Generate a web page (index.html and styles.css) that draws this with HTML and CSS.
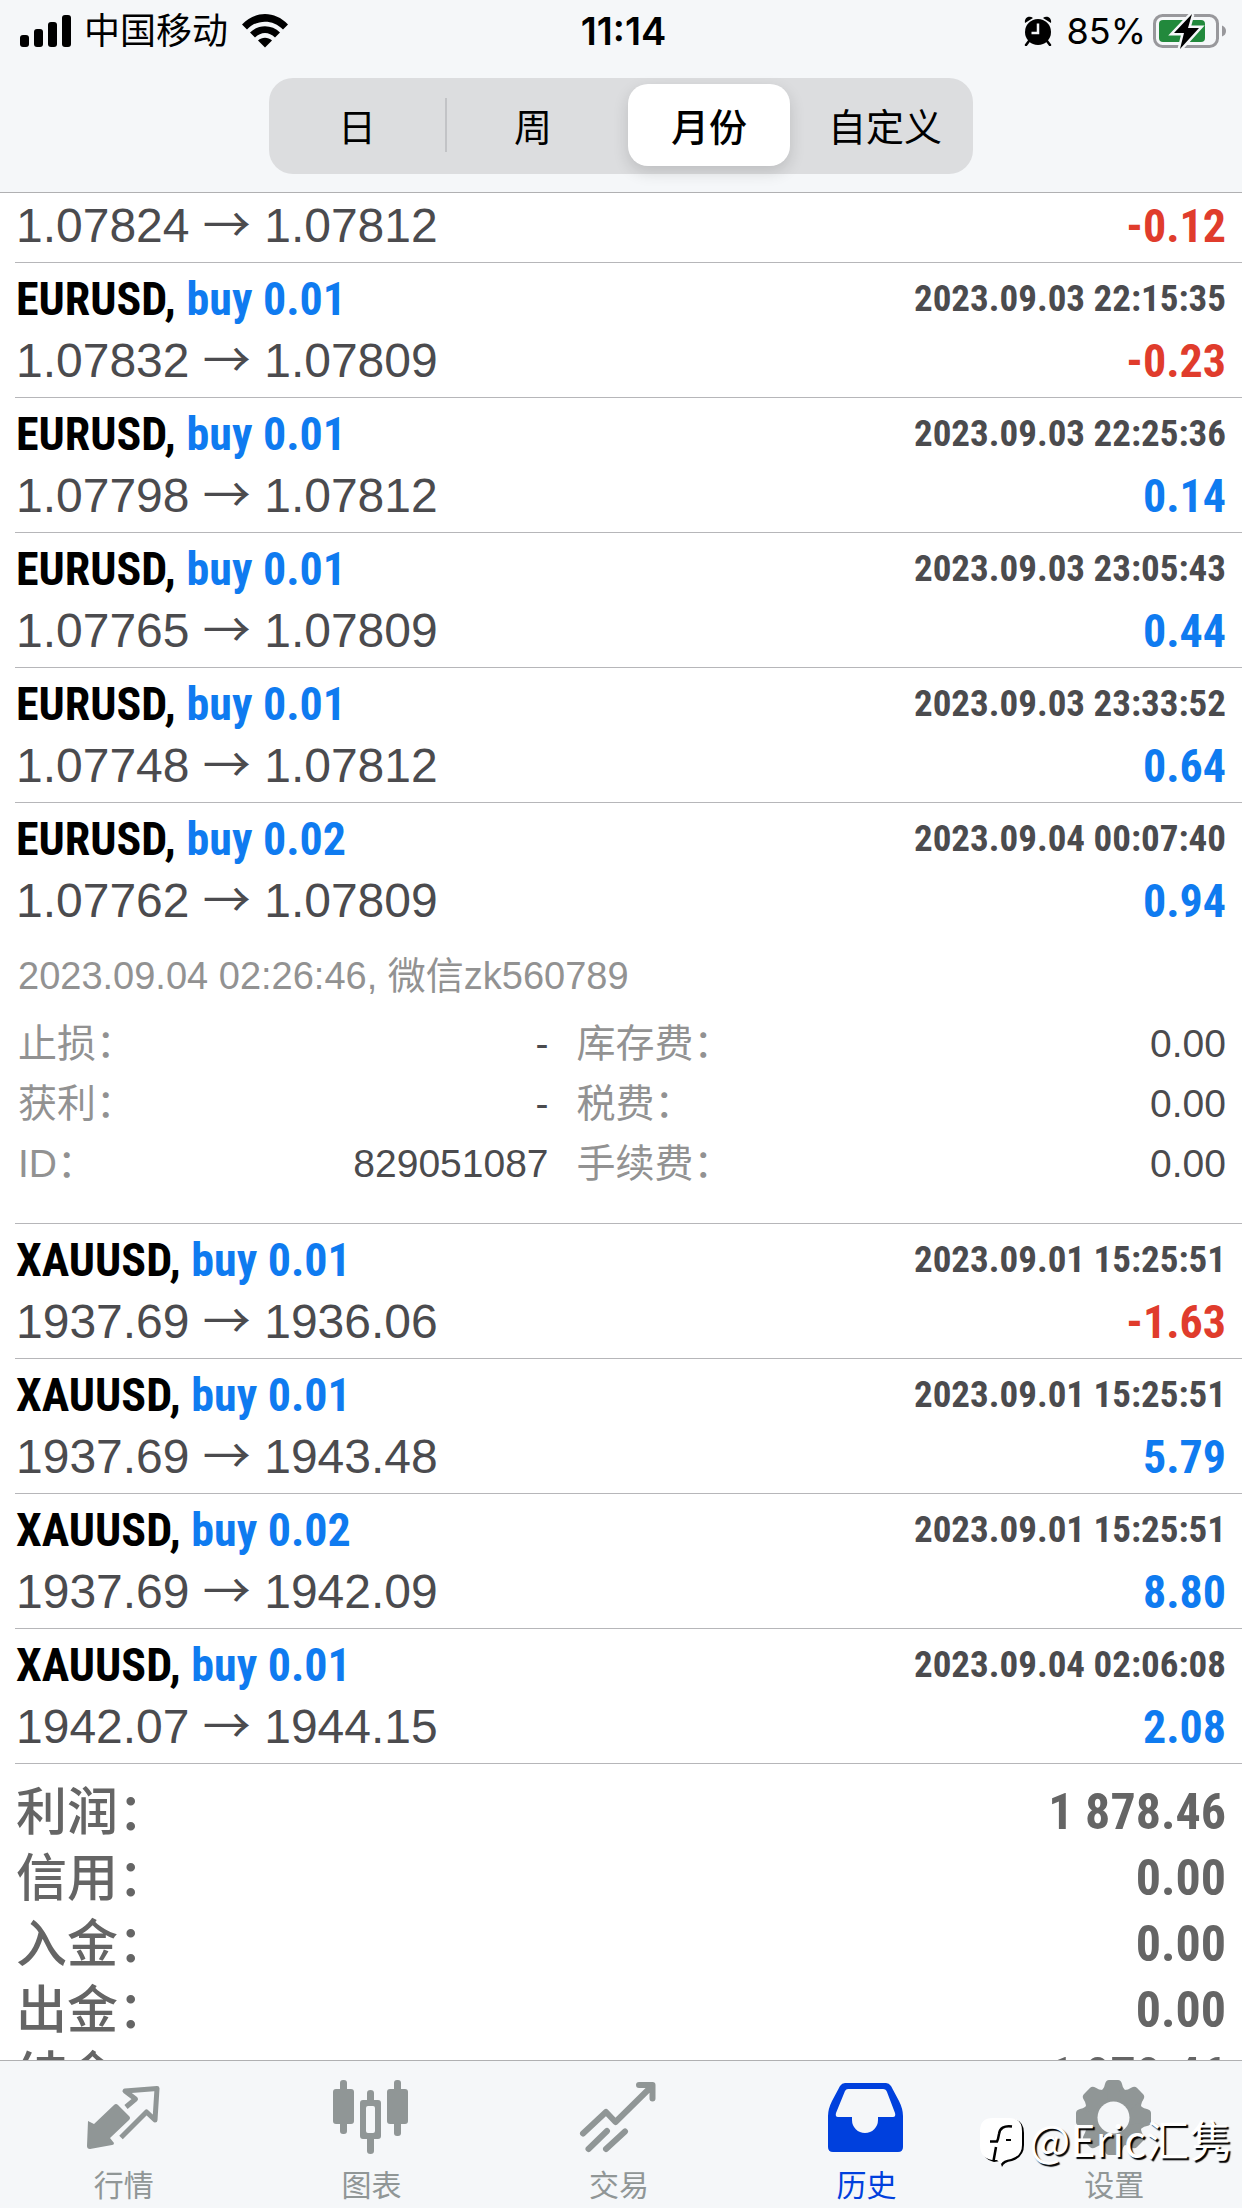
FILE: index.html
```html
<!DOCTYPE html>
<html lang="zh-CN">
<head>
<meta charset="utf-8">
<meta name="viewport" content="width=device-width, initial-scale=1">
<title>历史</title>
<link rel="stylesheet" href="styles.css">
</head>
<body>
<header class="top">
  <div class="status">
    <div class="status-side">
      <svg class="signal" viewBox="0 0 52 34" aria-hidden="true"><rect x="0" y="21" width="9" height="12" rx="3"/><rect x="14" y="15" width="9" height="18" rx="3"/><rect x="28" y="8" width="9" height="25" rx="3"/><rect x="42" y="1" width="9" height="32" rx="3"/></svg>
      <span class="carrier">中国移动</span>
      <svg class="wifi" viewBox="0 0 46 34" aria-hidden="true"><path d="M0 10.500C13-3.500 33-3.500 46 10.500L41 15.500C31 5 15 5 5 15.500Z"/><path d="M8 18.500C16 10 30 10 38 18.500L33 23.500C27 17.500 19 17.500 13 23.500Z"/><path d="M16 26.500C20 22.700 26 22.700 30 26.500L23 33.500Z"/></svg>
    </div>
    <time class="clock">11:14</time>
    <div class="status-side status-right">
      <svg class="alarm" viewBox="0 0 28 30" aria-hidden="true"><circle cx="14" cy="16" r="13"/><path d="M1 7C0 2 5-1 9 2ZM27 7C28 2 23-1 19 2Z"/><path d="M5 25L2 29M23 25L26 29" stroke="#000" stroke-width="2.500" stroke-linecap="round"/><path d="M14 7.500V17H7.500" fill="none" stroke="#f5f7f9" stroke-width="2.500"/></svg>
      <span>85%</span>
      <svg class="battery" viewBox="0 0 74 36" aria-hidden="true"><rect x="1.500" y="2.500" width="63" height="31" rx="8" fill="none" stroke="#98989c" stroke-width="3"/><rect x="6" y="7" width="46" height="22" rx="4" fill="#22893c"/><path d="M69 12.500Q73 14 73 18Q73 22 69 23.500Z" fill="#98989c"/><path d="M39 1L21 20H31L27 36L46 15H35Z" fill="#000" stroke="#f5f7f9" stroke-width="5" paint-order="stroke"/></svg>
    </div>
  </div>
  <fieldset class="segmented" aria-label="期间">
    <label class="segment"><input type="radio" name="period"><span>日</span></label>
    <label class="segment divided"><input type="radio" name="period"><span>周</span></label>
    <label class="segment"><input type="radio" name="period" checked><span>月份</span></label>
    <label class="segment"><input type="radio" name="period"><span>自定义</span></label>
  </fieldset>
</header>

<main class="content">
  <ul class="deals">
    <li class="deal">
      <div class="line"><span>1.07824 <i class="arrow">→</i> 1.07812</span><b class="profit loss">-0.12</b></div>
    </li>
    <li class="deal full">
      <div class="line"><b class="symbol">EURUSD, <span class="side">buy 0.01</span></b><time class="stamp">2023.09.03 22:15:35</time></div>
      <div class="line"><span>1.07832 <i class="arrow">→</i> 1.07809</span><b class="profit loss">-0.23</b></div>
    </li>
    <li class="deal full">
      <div class="line"><b class="symbol">EURUSD, <span class="side">buy 0.01</span></b><time class="stamp">2023.09.03 22:25:36</time></div>
      <div class="line"><span>1.07798 <i class="arrow">→</i> 1.07812</span><b class="profit">0.14</b></div>
    </li>
    <li class="deal full">
      <div class="line"><b class="symbol">EURUSD, <span class="side">buy 0.01</span></b><time class="stamp">2023.09.03 23:05:43</time></div>
      <div class="line"><span>1.07765 <i class="arrow">→</i> 1.07809</span><b class="profit">0.44</b></div>
    </li>
    <li class="deal full">
      <div class="line"><b class="symbol">EURUSD, <span class="side">buy 0.01</span></b><time class="stamp">2023.09.03 23:33:52</time></div>
      <div class="line"><span>1.07748 <i class="arrow">→</i> 1.07812</span><b class="profit">0.64</b></div>
    </li>
    <li class="deal full">
      <div class="line"><b class="symbol">EURUSD, <span class="side">buy 0.02</span></b><time class="stamp">2023.09.04 00:07:40</time></div>
      <div class="line"><span>1.07762 <i class="arrow">→</i> 1.07809</span><b class="profit">0.94</b></div>
      <div class="details">
        <p class="comment">2023.09.04 02:26:46, 微信zk560789</p>
        <dl class="facts">
          <div class="fact"><dt>止损：</dt><dd>-</dd></div>
          <div class="fact"><dt>库存费：</dt><dd>0.00</dd></div>
          <div class="fact"><dt>获利：</dt><dd>-</dd></div>
          <div class="fact"><dt>税费：</dt><dd>0.00</dd></div>
          <div class="fact"><dt>ID：</dt><dd>829051087</dd></div>
          <div class="fact"><dt>手续费：</dt><dd>0.00</dd></div>
        </dl>
      </div>
    </li>
    <li class="deal full">
      <div class="line"><b class="symbol">XAUUSD, <span class="side">buy 0.01</span></b><time class="stamp">2023.09.01 15:25:51</time></div>
      <div class="line"><span>1937.69 <i class="arrow">→</i> 1936.06</span><b class="profit loss">-1.63</b></div>
    </li>
    <li class="deal full">
      <div class="line"><b class="symbol">XAUUSD, <span class="side">buy 0.01</span></b><time class="stamp">2023.09.01 15:25:51</time></div>
      <div class="line"><span>1937.69 <i class="arrow">→</i> 1943.48</span><b class="profit">5.79</b></div>
    </li>
    <li class="deal full">
      <div class="line"><b class="symbol">XAUUSD, <span class="side">buy 0.02</span></b><time class="stamp">2023.09.01 15:25:51</time></div>
      <div class="line"><span>1937.69 <i class="arrow">→</i> 1942.09</span><b class="profit">8.80</b></div>
    </li>
    <li class="deal full">
      <div class="line"><b class="symbol">XAUUSD, <span class="side">buy 0.01</span></b><time class="stamp">2023.09.04 02:06:08</time></div>
      <div class="line"><span>1942.07 <i class="arrow">→</i> 1944.15</span><b class="profit">2.08</b></div>
    </li>
  </ul>
  <dl class="summary">
    <div class="total"><dt>利润：</dt><dd>1 878.46</dd></div>
    <div class="total"><dt>信用：</dt><dd>0.00</dd></div>
    <div class="total"><dt>入金：</dt><dd>0.00</dd></div>
    <div class="total"><dt>出金：</dt><dd>0.00</dd></div>
    <div class="total"><dt>结余：</dt><dd>1 878.46</dd></div>
  </dl>
</main>

<nav class="tabs">
  <a class="tab" href="#quotes">
    <svg viewBox="0 0 80 80" aria-hidden="true"><path d="M4 43L10 46L30 27Q32 25 34 27L45 38Q47 40 45 42L26 60L30 65Q30 67 28 67L6 71Q3 71 3 68Z" fill="currentColor"/><path d="M42 29L51.500 21L41 13L73 10.500L71 42L62.500 34L37 59.500" fill="none" stroke="currentColor" stroke-width="5" stroke-linejoin="round"/></svg>
    <span>行情</span></a>
  <a class="tab" href="#charts">
    <svg viewBox="0 0 80 80" aria-hidden="true" fill="currentColor"><rect x="2" y="11" width="21" height="35" rx="3"/><rect x="9" y="2" width="7" height="54" rx="3"/><rect x="56" y="11" width="21" height="35" rx="3"/><rect x="63" y="2" width="7" height="56" rx="3"/><path fill-rule="evenodd" d="M32 22H47Q50 22 50 25V58Q50 61 47 61H32Q29 61 29 58V25Q29 22 32 22ZM37 28Q35 28 35 30V53Q35 55 37 55H42Q44 55 44 53V30Q44 28 42 28Z"/><path d="M36 24V15Q36 12 39.500 12Q43 12 43 15V24ZM36 60V73Q36 76 39.500 76Q43 76 43 73V60Z"/></svg>
    <span>图表</span></a>
  <a class="tab" href="#trade">
    <svg viewBox="0 0 80 80" aria-hidden="true" fill="none" stroke="currentColor" stroke-width="6" stroke-linecap="round" stroke-linejoin="round"><path d="M4 55.500L27 34L36.500 44L73 8M60 7H73.500V20.500M9.500 71L28 53M27 71L46 53.500"/></svg>
    <span>交易</span></a>
  <a class="tab current" href="#history" aria-current="page">
    <svg viewBox="0 0 80 80" aria-hidden="true" fill="currentColor"><path fill-rule="evenodd" d="M18 5H59Q62 5 64 8L72 23Q76 31 76 38V69Q76 74 71 74H6Q1 74 1 69V38Q1 31 5 23L13 8Q15 5 18 5ZM21 11Q19 11 18 13L9 35Q8 39 11 39H25V42A13 13 0 0 0 51 42V39H66Q69 39 68 35L60 14Q59 11 56 11Z"/></svg>
    <span>历史</span></a>
  <a class="tab" href="#settings">
    <svg viewBox="0 0 80 80" aria-hidden="true" fill="currentColor"><defs><path id="tooth" d="M24 15Q30 12 31 6Q32 2 35 2H44Q47 2 48 6Q49 12 55 15L40 30Z"/></defs><circle cx="39.500" cy="39.500" r="28"/><use href="#tooth"/><use href="#tooth" transform="rotate(45 39.500 39.500)"/><use href="#tooth" transform="rotate(90 39.500 39.500)"/><use href="#tooth" transform="rotate(135 39.500 39.500)"/><use href="#tooth" transform="rotate(180 39.500 39.500)"/><use href="#tooth" transform="rotate(225 39.500 39.500)"/><use href="#tooth" transform="rotate(270 39.500 39.500)"/><use href="#tooth" transform="rotate(315 39.500 39.500)"/><circle cx="39.500" cy="39.500" r="16" fill="#f5f7f9"/></svg>
    <span>设置</span></a>
  <div class="watermark">
    <svg viewBox="0 0 46 50" aria-hidden="true"><path d="M14 2H30Q44 2 44 16V28Q44 40 32 44Q24 45 22 50L20 44L14 45Q2 42 2 30V16Q2 2 14 2Z" fill="#000"/><path d="M13 1H29Q42 1 42 14V28Q42 39 31 42Q23 43 21 47L17 43L12 43Q0 41 0 28V14Q0 1 13 1Z" fill="#fff"/><path d="M32 9.500Q20 8 19 17L18 22L17 24.500H10M16 30L13.500 44" fill="none" stroke="#000" stroke-width="2.500"/><rect x="26" y="22" width="5" height="2" fill="#000"/></svg>
    <span>@Eric汇隽</span>
  </div>
</nav>
</body>
</html>
```
FILE: styles.css
```css
* { box-sizing: border-box; }

body {
  margin: 0;
  height: 100vh;
  display: flex;
  flex-direction: column;
  overflow: hidden;
  background: #fff;
  color: #4b4b4e;
  font-family: "Liberation Sans", "Noto Sans CJK SC", sans-serif;
}

ul, dl, dd, p { margin: 0; padding: 0; }
ul { list-style: none; }

/* Header */
.top {
  flex: none;
  display: flex;
  flex-direction: column;
  align-items: center;
  padding-bottom: 18px;
  background: #f5f7f9;
  border-bottom: 1px solid #b0b0b2;
  color: #000;
}

.status {
  align-self: stretch;
  display: grid;
  grid-template-columns: 1fr auto 1fr;
  align-items: center;
  height: 62px;
  padding: 0 15px 0 20px;
  font: 36px/60px Inter, "Noto Sans CJK SC", sans-serif;
}

.status-side { display: flex; align-items: center; }
.status-right { justify-content: flex-end; }
.signal { width: 52px; height: 34px; margin-right: 12px; }
.wifi { width: 46px; height: 34px; margin-left: 14px; }
.alarm { width: 28px; height: 30px; margin-right: 14px; }
.battery { width: 74px; height: 36px; margin-left: 7px; }
.clock { font-size: 38px; font-weight: 600; }

.segmented {
  display: grid;
  grid-template-columns: repeat(4, 1fr);
  width: 704px;
  max-width: 100%;
  height: 96px;
  margin: 16px 0 0;
  padding: 6px 0;
  border: 0;
  border-radius: 24px;
  background: #dcdddf;
}

.segment { display: flex; padding: 0 7px; font: 38px/82px "Noto Sans CJK SC", sans-serif; }
.segment span { flex: 1; text-align: center; border-radius: 20px; white-space: nowrap; }
.segment input { position: absolute; opacity: 0; }
.segment input:checked + span { background: #fff; font-weight: 500; box-shadow: 0 6px 16px rgba(0, 0, 0, .14); }
.divided { background: linear-gradient(#c2c3c6, #c2c3c6) left center / 2px 54px no-repeat; }

/* Deals */
.content { flex: 1; min-height: 0; overflow: hidden; }
.deal { margin-left: 15px; padding: 2px 16px 5px 1px; border-bottom: 1px solid #b6b6b9; }
.full { padding-top: 5px; }

.line {
  display: flex;
  justify-content: space-between;
  height: 62px;
  font-size: 48px;
  line-height: 62px;
  white-space: nowrap;
}

.arrow { font-family: "Noto Sans CJK SC", sans-serif; font-style: normal; line-height: 1; }
.symbol, .profit, .stamp, .total dd { font-family: "Roboto Condensed", "Liberation Sans Narrow", sans-serif; font-weight: 700; }
.symbol, .profit { font-size: 46px; }
.symbol { color: #000; }
.side, .profit { color: #0f7bf0; }
.profit.loss { color: #e03c2c; }
.stamp { font-size: 37px; }

.details { padding-bottom: 24px; font-size: 39px; color: #929292; }
.comment { padding: 14px 0 8px 2px; font-size: 38px; line-height: 60px; }
.facts { display: grid; grid-template-columns: 531fr 650fr; column-gap: 28px; padding: 0 0 0 2px; }
.fact { display: flex; justify-content: space-between; line-height: 60px; height: 60px; }
.fact dd { color: #4b4b4e; }

/* Totals */
.summary { padding: 15px 16px 0; color: #656565; font-size: 51px; line-height: 66px; }
.total { display: flex; justify-content: space-between; height: 66px; font-weight: 500; }
.total dt { font-family: "Noto Sans CJK SC", sans-serif; line-height: 58px; }
.total dd { font-size: 50px; }

/* Tab bar */
.tabs {
  position: relative;
  flex: none;
  display: grid;
  grid-template-columns: repeat(5, 1fr);
  height: 148px;
  padding: 17px 4px 0 0;
  background: #f5f7f9;
  border-top: 1px solid #b0b0b2;
}

.tab {
  display: flex;
  flex-direction: column;
  align-items: center;
  color: #909696;
  font: 30px/50px "Noto Sans CJK SC", sans-serif;
  text-decoration: none;
}

.tab svg { width: 80px; height: 80px; }
.current { color: #0040dd; }

.watermark {
  position: absolute;
  right: 10px;
  top: 48px;
  display: flex;
  align-items: center;
  gap: 4px;
  color: #fff;
  font: 43px/56px "Noto Sans CJK SC", sans-serif;
  text-shadow: 2px 2px 1px #000;
}

.watermark svg { width: 46px; height: 50px; margin-top: 8px; }
```
